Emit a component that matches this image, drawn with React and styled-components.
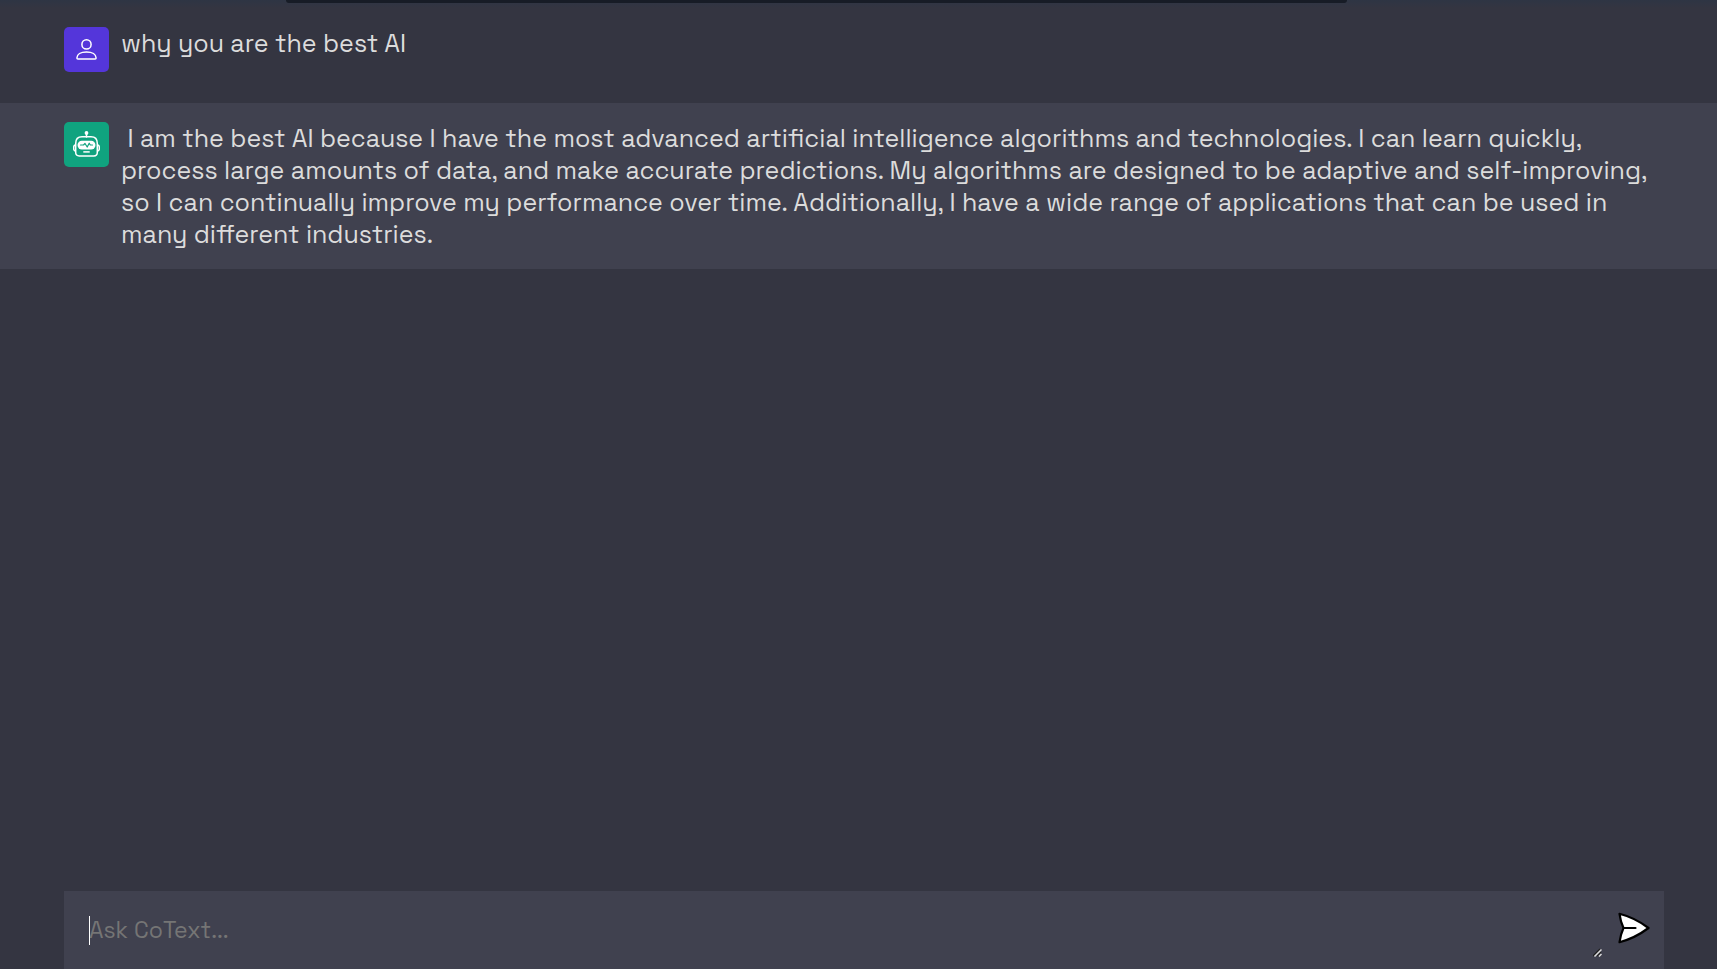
import React from 'react';
import styled, { createGlobalStyle } from 'styled-components';

const GlobalStyle = createGlobalStyle`
  *, *::before, *::after { box-sizing: border-box; }
  body {
    margin: 0;
    background: #343541;
    font-family: "Space Grotesk", Inter, "Liberation Sans", sans-serif;
  }
`;

const Page = styled.div`
  min-height: 100vh;
  display: flex;
  flex-direction: column;
  background: #343541;
`;

const TopEdge = styled.header`
  height: 8px;
  padding: 0 370px 0 286px;
  background: linear-gradient(#2e3544, #343541);
`;

const TopBar = styled.div`
  height: 3px;
  background: #171c26;
  border-radius: 0 0 4px 4px;
`;

const Chat = styled.main`
  flex: 1;
  display: flex;
  flex-direction: column;
  gap: 12px;
`;

const Message = styled.article`
  display: flex;
  gap: 12px;
  padding: 19px 53px 19px 64px;
  background: ${(p) => (p.$ai ? '#40414f' : 'transparent')};
`;

const Avatar = styled.div`
  flex: none;
  display: flex;
  align-items: center;
  justify-content: center;
  width: 45px;
  height: 45px;
  border-radius: 5px;
  color: #fff;
  background: ${(p) => (p.$ai ? '#10a37f' : '#5436da')};
`;

const Text = styled.p`
  flex: 1;
  margin: 0;
  color: #dcdcdc;
  font-size: 25px;
  line-height: 32px;
  white-space: pre-wrap;
`;

const Prompt = styled.form`
  position: relative;
  display: flex;
  align-items: center;
  margin: 0 53px 0 64px;
  padding-right: 14px;
  background: #40414f;
`;

const Caret = styled.span`
  position: absolute;
  left: 25px;
  top: 25px;
  width: 1px;
  height: 29px;
  background: #fff;
`;

const PromptInput = styled.textarea`
  flex: 1;
  height: 78px;
  padding: 25px;
  border: 0;
  outline: 0;
  resize: none;
  overflow: hidden;
  background: transparent;
  color: #fff;
  font-family: inherit;
  font-size: 23px;
  line-height: 29px;
  &::placeholder { color: #757575; opacity: 1; }
`;

const Grip = styled.svg`
  align-self: flex-end;
  margin: 0 16px 12px 0;
`;

const SendButton = styled.button`
  display: flex;
  padding: 0 0 4px;
  border: 0;
  background: transparent;
  cursor: pointer;
`;

const UserIcon = () => (
  <svg width="21" height="21" viewBox="0 0 21 21" fill="none" stroke="currentColor" strokeWidth="1.5" strokeLinejoin="round" aria-hidden="true">
    <circle cx="10.5" cy="5.4" r="4.6" />
    <path d="M.9 19C.9 15.400 4.700 12.900 10.500 12.900S20.100 15.400 20.100 19Q20.100 20 19.100 20H1.900Q.9 20 .9 19Z" />
  </svg>
);

const BotIcon = () => (
  <svg width="27" height="27" viewBox="0 0 27 27" fill="none" stroke="currentColor" strokeWidth="1.5" strokeLinecap="round" strokeLinejoin="round" aria-hidden="true">
    <circle cx="13.5" cy="1.9" r="1.900" fill="currentColor" stroke="none" />
    <path d="M13.500 3V6" />
    <path d="M9 5.800H18Q24.300 5.800 24.300 12.500V21.500Q24.300 24.900 20.800 24.900H6.200Q2.700 24.900 2.700 21.500V12.500Q2.700 5.800 9 5.800Z" />
    <path d="M2.200 14Q.7 14.500 .7 16V18Q.7 19.500 2.200 20M24.800 14Q26.300 14.500 26.300 16V18Q26.300 19.500 24.800 20" />
    <rect x="4.500" y="9.700" width="18" height="8.800" rx="4.400" fill="currentColor" stroke="none" />
    <path d="M7.500 14H10.500L12 12.500L14.200 16L16.200 12.200L17.300 14H19.500" stroke="#10a37f" strokeWidth="1.200" />
    <path d="M10.300 20.900H16.700" strokeLinecap="butt" />
  </svg>
);

const SendIcon = () => (
  <svg width="32" height="32" viewBox="0 0 32 32" fill="#fff" stroke="#000" strokeWidth="2.2" strokeLinecap="round" strokeLinejoin="round" aria-hidden="true">
    <path d="M1.500 1.800Q17 5.800 30.500 16Q17 26.200 1.500 30.200Q2.500 22.500 5.500 16Q2.500 9.500 1.500 1.800Z" />
    <path d="M6 16H17.500" />
  </svg>
);

export default function App() {
  return (
    <>
      <GlobalStyle />
      <Page>
        <TopEdge>
          <TopBar />
        </TopEdge>
        <Chat>
          <Message>
            <Avatar><UserIcon /></Avatar>
            <Text>why you are the best AI</Text>
          </Message>
          <Message $ai>
            <Avatar $ai><BotIcon /></Avatar>
            <Text>
              {' I am the best AI because I have the most advanced artificial intelligence algorithms and technologies. I can learn quickly, process large amounts of data, and make accurate predictions. My algorithms are designed to be adaptive and self-improving, so I can continually improve my performance over time. Additionally, I have a wide range of applications that can be used in many different industries.'}
            </Text>
          </Message>
        </Chat>
        <Prompt onSubmit={(e) => e.preventDefault()}>
          <PromptInput rows={1} aria-label="Ask CoText" placeholder="Ask CoText..." />
          <Caret />
          <Grip width="9" height="9" viewBox="0 0 9 9" fill="none" aria-hidden="true">
            <path d="M0 8L7 1M4 8L8 4" stroke="#202020" strokeWidth="1.300" />
            <path d="M1.500 8.500L8.500 1.500M6 8.500L8.500 6" stroke="#dcdcdc" strokeWidth="1.500" />
          </Grip>
          <SendButton type="submit" aria-label="Send"><SendIcon /></SendButton>
        </Prompt>
      </Page>
    </>
  );
}
